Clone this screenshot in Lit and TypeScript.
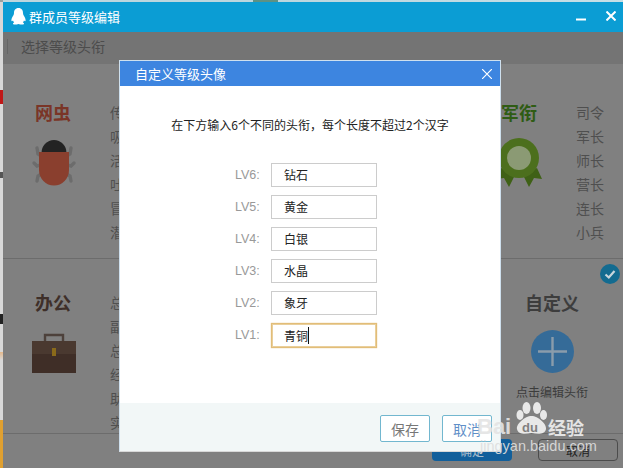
import { LitElement, html, css, svg } from "lit";
import { customElement } from "lit/decorators.js";

const bug = svg`<svg class="ico shift" width="44" height="50" viewBox="0 0 44 50">
  <g fill="none" stroke="#6c6c6c" stroke-width="3.4" stroke-linecap="round">
    <path d="M5 9 L6 15 L11 18"/><path d="M39 9 L38 15 L33 18"/>
    <path d="M2 24 L5 27 L11 25"/><path d="M42 24 L39 27 L33 25"/>
    <path d="M5 42 L6 37 L11 34"/><path d="M39 42 L38 37 L33 34"/>
  </g>
  <path d="M9.5 14 a12.5 13 0 0 1 25 0z" fill="#232323"/>
  <path d="M7 13 H37 V31 a15 15.500 0 0 1 -30 0z" fill="#8a3f2e"/>
</svg>`;

const medal = svg`<svg class="ico" width="50" height="50" viewBox="0 0 50 50">
  <path d="M21 36 L15 48 L10 39 L2 40 L7 29z" fill="#3f6116"/>
  <path d="M29 36 L35 48 L40 39 L48 40 L43 29z" fill="#3f6116"/>
  <circle cx="25" cy="19" r="20" fill="#4c6f1d"/>
  <circle cx="25" cy="19" r="12" fill="#8b9a74"/>
</svg>`;

const briefcase = svg`<svg class="ico shift case" width="44" height="40" viewBox="0 0 44 40">
  <path d="M13 8 V2 H31 V8" fill="none" stroke="#4d413b" stroke-width="2.400"/>
  <rect x="0" y="8" width="44" height="32" fill="#3f2e27"/>
  <rect x="0" y="8" width="44" height="13" fill="#4a3930"/>
  <rect x="20" y="15" width="4" height="8" fill="#8a6a1a"/>
</svg>`;

const plus = svg`<svg width="43" height="43" viewBox="0 0 43 43">
  <circle cx="21.500" cy="21.500" r="21.500" fill="#356b98"/>
  <path d="M21.500 7 V36 M7 21.500 H36" stroke="#8a9cab" stroke-width="2.400"/>
</svg>`;

const check = svg`<svg width="20" height="20" viewBox="0 0 20 20">
  <circle cx="10" cy="10" r="10" fill="#136b90"/>
  <path d="M5.500 10.500 L8.800 13.500 L14.500 7" fill="none" stroke="#c9d6dc" stroke-width="2.200"/>
</svg>`;

const penguin = svg`<svg width="15" height="17" viewBox="0 0 15 17">
  <path fill="#fff" d="M7.500 0 C4.300 0 3 2.400 3 5 C3 6 2.800 6.600 2.300 7.400 C1.200 9 .3 10.600 .4 12.400 C.5 13.400 1.100 13.400 2 12.400 C2.200 13.200 2.600 13.900 3.200 14.400 C2.200 14.800 1.700 15.400 2.100 16 C2.600 16.800 5.300 16.800 7.500 15.900 C9.700 16.800 12.400 16.800 12.900 16 C13.300 15.400 12.800 14.800 11.800 14.400 C12.400 13.900 12.800 13.200 13 12.400 C13.900 13.400 14.500 13.400 14.600 12.400 C14.700 10.600 13.800 9 12.700 7.400 C12.200 6.600 12 6 12 5 C12 2.400 10.700 0 7.500 0z"/>
</svg>`;

@customElement("app-root")
export class AppRoot extends LitElement {
  static styles = css`
    :host {
      display: block;
      position: relative;
      width: 623px;
      height: 468px;
      overflow: hidden;
      font-family: "Noto Sans CJK SC", "Liberation Sans", sans-serif;
      background: #ccc;
    }
    * { box-sizing: border-box; }
    .desk-top {
      height: 2px;
      background: linear-gradient(90deg, #9aa0a0 0, #9aa0a0 3px, #bcd6de 3px, #bcd6de 253px, #5d9184 253px, #5d9184 278px, #bcd6de 278px, #c6dfe6 100%);
    }
    .stage { display: flex; height: 466px; }
    .desk-left {
      width: 3px;
      background: linear-gradient(180deg, #d8d8d8 0, #d8d8d8 88px, #c01818 88px, #c01818 102px, #d8d8d8 102px, #d8d8d8 170px, #555 170px, #555 176px, #d8d8d8 176px, #d8d8d8 312px, #222 312px, #222 322px, #d8d8d8 322px, #d8d8d8 350px, #e5b88a 350px, #d8d8d8 358px, #d8d8d8 418px, #e0a030 418px, #e0a030 100%);
    }
    .win { flex: 1; display: flex; flex-direction: column; background: #808080; min-width: 0; }
    .titlebar {
      height: 30px; background: #0b9dd4; color: #fff; display: flex; align-items: center;
      padding: 0 7px 0 8px; font-size: 13px; gap: 3px; flex: none;
    }
    .titlebar .name { flex: 1; position: relative; top: -1px; }
    .titlebar svg { position: relative; top: -1px; }
    .winbtns { display: flex; align-items: center; gap: 20px; }
    .subbar {
      height: 32px; background: #747474; color: #4c4c4c; font-size: 14px; display: flex; flex: none;
      align-items: center; padding: 0 0 4px 4px; gap: 13px;
    }
    .subbar i { width: 1px; height: 15px; background: #656565; }
    .row { display: flex; position: relative; border-bottom: 1px solid #6c6c6c; padding-left: 14px; flex: none; overflow: hidden; }
    .row.one { height: 195px; padding-top: 35px; }
    .row.two { height: 175px; padding-top: 30px; }
    .sec { display: flex; width: 233px; flex: none; }
    .lead { width: 72px; display: flex; flex-direction: column; align-items: center; flex: none; }
    .lead h3 { margin: 0 0 14px; font-size: 18px; line-height: 26px; font-weight: 700; white-space: nowrap; }
    .ico { display: block; overflow: visible; }
    .shift { margin-left: 2px; }
    .case { margin-top: 4px; }
    .list { margin: 1px 0 0 21px; padding: 0; list-style: none; font-size: 14px; line-height: 24px; color: #4f4f4f; width: 60px; }
    .bug { color: #7a3527; }
    .mil { color: #2f5c14; }
    .off { color: #3e2f29; }
    .cus { color: #3d3d3d; }
    .custom { margin-left: 17px; width: 104px; flex: none; display: flex; flex-direction: column; align-items: center; }
    .custom h3 { margin: 0 0 15px; font-size: 18px; line-height: 26px; font-weight: 700; }
    .custom p { margin: 10px 0 0; font-size: 12px; line-height: 18px; color: #3c3c3c; white-space: nowrap; }
    .badge { position: absolute; right: 3px; top: 5px; line-height: 0; }
    .foot { flex: 1; display: flex; justify-content: flex-end; align-items: flex-start; gap: 26px; padding: 5px 5px 0 0; }
    .fbtn { width: 80px; height: 22px; border-radius: 4px; font-size: 12px; display: flex; align-items: center; justify-content: center; }
    .ok { background: #125f9b; color: #a8bccb; }
    .cancel { border: 1px solid #4c4c4c; color: #222; }
    .dialog {
      position: absolute; left: 119px; top: 60px; width: 382px; height: 392px; background: #fff;
      border: 1px solid #cfe0ee; border-bottom-color: #d8d8d8; display: flex; flex-direction: column;
    }
    .dhead { height: 25px; background: #3d85e0; color: #fff; font-size: 13px; display: flex; align-items: center; justify-content: space-between; padding: 0 8px 0 15px; flex: none; }
    .dbody { flex: 1; display: flex; flex-direction: column; align-items: center; padding-top: 30px; }
    .hint { margin: 0 0 29px; font-size: 12px; line-height: 18px; color: #222; }
    .form { display: flex; flex-direction: column; gap: 8px; padding-right: 8px; }
    .line { display: flex; align-items: center; gap: 12px; }
    .line label { width: 24px; font: 12.500px/1 "Liberation Sans", sans-serif; color: #999; white-space: nowrap; }
    .field { width: 106px; height: 24px; border: 1px solid #ccc; padding-left: 12px; font-size: 12px; line-height: 22px; color: #222; display: flex; }
    .field.focus { border: 1px solid #e2bd78; box-shadow: inset 0 0 0 1px #e9cf9c, 0 0 1px #e2bd78; height: 25px; line-height: 23px; }
    .caret { width: 1px; height: 17px; background: #111; margin-top: 3px; }
    .dfoot { flex: none; height: 48px; background: #f2f7f7; display: flex; justify-content: flex-end; gap: 12px; padding: 12px 8px 0 0; }
    .dbtn { width: 50px; height: 27px; border: 1px solid #72b7cf; border-radius: 2px; background: #fff; font-size: 14px; display: flex; align-items: center; justify-content: center; }
    .save { color: #777; }
    .quit { color: #5f8fc8; }
    .mark { position: absolute; left: 478px; top: 400px; width: 114px; height: 58px; color: #fff; pointer-events: none; }
    .mark .paw { position: absolute; left: 37px; top: 2px; }
    .mark .bai { position: absolute; left: -1px; top: 14px; font: 700 22px/26px "Liberation Sans", sans-serif; color: #e4e4e4; opacity: .9; }
    .mark .du { position: absolute; left: 44px; top: 20px; font: 700 13px/16px "Liberation Sans", sans-serif; color: #808080; }
    .mark .jy { position: absolute; left: 70px; top: 14px; font-size: 18px; line-height: 26px; font-weight: 700; color: #e4e4e4; }
    .mark .url { position: absolute; left: 2px; top: 37px; font: 14.500px/18px "Liberation Sans", sans-serif; white-space: nowrap; color: #dedede; opacity: .9; }
  `;

  private list(items: string[]) {
    return html`<ul class="list">${items.map((t) => html`<li>${t}</li>`)}</ul>`;
  }

  render() {
    const levels = [
      ["LV6:", "钻石"], ["LV5:", "黄金"], ["LV4:", "白银"],
      ["LV3:", "水晶"], ["LV2:", "象牙"], ["LV1:", "青铜"],
    ];
    return html`
      <div class="desk-top"></div>
      <div class="stage">
        <div class="desk-left"></div>
        <div class="win">
          <div class="titlebar">
            ${penguin}
            <span class="name">群成员等级编辑</span>
            <div class="winbtns">
              <svg width="10" height="10" viewBox="0 0 10 10"><path d="M0 8.500 H10" stroke="#fff" stroke-width="2"/></svg>
              <svg width="10" height="10" viewBox="0 0 10 10"><path d="M.5 .5 L9.500 9.500 M9.500 .5 L.5 9.500" stroke="#fff" stroke-width="2"/></svg>
            </div>
          </div>
          <div class="subbar"><i></i><span>选择等级头衔</span></div>
          <div class="row one">
            <div class="sec">
              <div class="lead"><h3 class="bug">网虫</h3>${bug}</div>
              ${this.list(["传奇", "吸血", "活跃", "吐槽", "冒泡", "潜水"])}
            </div>
            <div class="sec"></div>
            <div class="sec">
              <div class="lead"><h3 class="mil">军衔</h3>${medal}</div>
              ${this.list(["司令", "军长", "师长", "营长", "连长", "小兵"])}
            </div>
          </div>
          <div class="row two">
            <div class="sec">
              <div class="lead"><h3 class="off">办公</h3>${briefcase}</div>
              ${this.list(["总裁", "副总", "总监", "经理", "助理", "实习"])}
            </div>
            <div class="sec"></div>
            <div class="custom">
              <h3 class="cus">自定义</h3>${plus}
              <p>点击编辑头衔</p>
            </div>
            <span class="badge">${check}</span>
          </div>
          <div class="foot">
            <div class="fbtn ok">确定</div>
            <div class="fbtn cancel">取消</div>
          </div>
        </div>
      </div>

      <div class="dialog">
        <div class="dhead">
          <span>自定义等级头像</span>
          <svg width="10" height="10" viewBox="0 0 10 10"><path d="M0 0 L10 10 M10 0 L0 10" stroke="#fff" stroke-width="1.200"/></svg>
        </div>
        <div class="dbody">
          <p class="hint">在下方输入6个不同的头衔，每个长度不超过2个汉字</p>
          <div class="form">
            ${levels.map(([l, v], i) => html`
              <div class="line">
                <label>${l}</label>
                <div class="field ${i === 5 ? "focus" : ""}">${v}${i === 5 ? html`<span class="caret"></span>` : ""}</div>
              </div>`)}
          </div>
        </div>
        <div class="dfoot">
          <div class="dbtn save">保存</div>
          <div class="dbtn quit">取消</div>
        </div>
      </div>

      <div class="mark">
        <svg class="paw" width="33" height="33" viewBox="0 0 33 33" fill="#e8e8e8">
          <ellipse cx="5" cy="13" rx="3.500" ry="5"/>
          <ellipse cx="11.500" cy="6" rx="4" ry="6"/>
          <ellipse cx="22" cy="6" rx="4" ry="6"/>
          <ellipse cx="28.500" cy="13" rx="3.500" ry="5"/>
          <path d="M16.500 14 C23 14 32 22 31 27 C30 33 22 32 16.500 31 C11 32 3 33 2 27 C1 22 10 14 16.500 14z"/>
        </svg>
        <span class="bai">Bai</span>
        <span class="du">du</span>
        <span class="jy">经验</span>
        <span class="url">jingyan.baidu.com</span>
      </div>
    `;
  }
}
